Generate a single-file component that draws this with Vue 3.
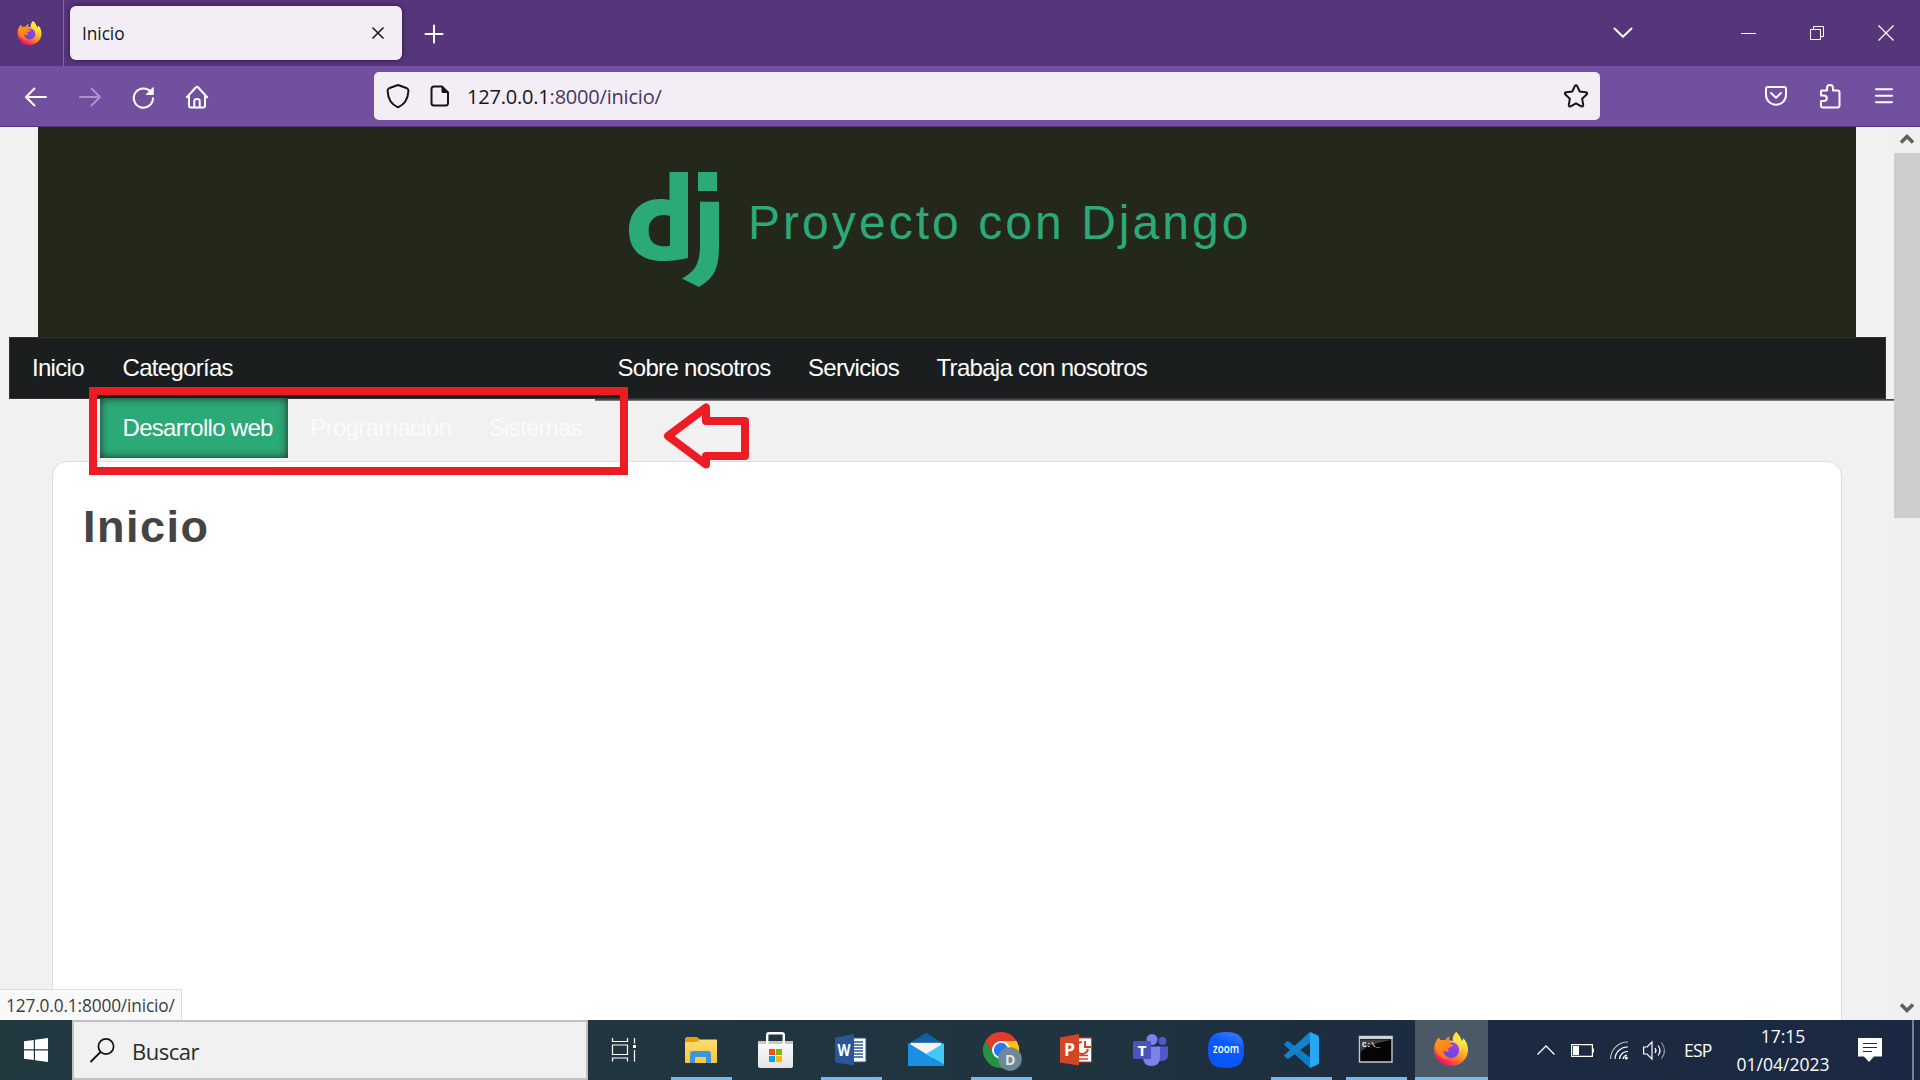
<script setup>
const mainLinks = ['Sobre nosotros', 'Servicios', 'Trabaja con nosotros']
const categories = ['Desarrollo web', 'Programación', 'Sistemas']
const apps = [
  { name: 'explorer', open: true },
  { name: 'store' },
  { name: 'word', open: true },
  { name: 'mail' },
  { name: 'chrome', open: true },
  { name: 'powerpoint' },
  { name: 'teams' },
  { name: 'zoom' },
  { name: 'code', open: true },
  { name: 'cmd', open: true },
  { name: 'firefox', open: true, active: true },
]
</script>

<template>
  <div class="screen">
    <svg class="defs" width="0" height="0">
      <defs>
        <linearGradient id="fxBody" x1="0.8" y1="0.1" x2="0.25" y2="1">
          <stop offset="0.1" stop-color="#fff04a" />
          <stop offset="0.4" stop-color="#ffb02a" />
          <stop offset="0.68" stop-color="#ff6a2c" />
          <stop offset="0.9" stop-color="#f5156c" />
        </linearGradient>
        <linearGradient id="fxGlobe" x1="0.7" y1="0" x2="0.3" y2="1">
          <stop offset="0" stop-color="#a63af5" />
          <stop offset="1" stop-color="#5a4be0" />
        </linearGradient>
        <linearGradient id="fxHead" x1="0" y1="0" x2="0.6" y2="1">
          <stop offset="0" stop-color="#ff9a1c" />
          <stop offset="1" stop-color="#ff7a1c" />
        </linearGradient>
        <linearGradient id="folder" x1="0" y1="0" x2="0" y2="1">
          <stop offset="0" stop-color="#ffdc77" />
          <stop offset="1" stop-color="#fdc637" />
        </linearGradient>
        <linearGradient id="bag" x1="0" y1="0" x2="0" y2="1">
          <stop offset="0" stop-color="#fdfdfd" />
          <stop offset="1" stop-color="#e4e4e4" />
        </linearGradient>
        <linearGradient id="zoomBg" x1="0.8" y1="0" x2="0.4" y2="1">
          <stop offset="0" stop-color="#3c7dff" />
          <stop offset="0.35" stop-color="#0b5cff" />
          <stop offset="1" stop-color="#0a54f5" />
        </linearGradient>
      </defs>
      <symbol id="fx" viewBox="0 0 34 34">
        <path d="M22.2 0C25 3 27 6 27.7 9C28.8 8.6 29 7.4 29.3 6.2C32.6 9.5 34 13.5 34 17.8C34 27.2 26.4 34 17 34C7.6 34 0 27 0 17.6C0 13 1.4 9 5 5.4C5.2 7 5.8 8 7 8.6C8.5 8 10 8 11.3 8.4C12.3 6.8 13.6 5.6 15.6 4.6C14.9 6 14.9 7.3 15.3 8.6L18.7 9C18.4 5.5 19.6 2.4 22.2 0Z" fill="url(#fxBody)" />
        <circle cx="17.3" cy="18.2" r="7.9" fill="url(#fxGlobe)" />
        <path d="M1.4 12C2.6 9.6 3.7 7 5 5.4C5.2 7 5.8 8 7 8.6C8.5 8 10 8 11.3 8.4C12.3 6.8 13.6 5.6 15.6 4.6C14.7 6.6 15 9.2 16.4 11.6L19.3 13.2C18.5 15 15.6 14.8 14.2 16.4C13.2 17.4 14 18.6 16 18.7C13 20.6 10.2 19.8 8.7 17.6C8.2 22.4 11.4 26 16.4 26.2C10 28 4.2 24.4 2.6 18.4C2.1 16.2 1.5 14 1.4 12Z" fill="url(#fxHead)" />
        <path d="M19.3 9.2C24.5 10.3 27 15 25.3 20C28.6 17.4 29 12 27.7 9C27 6 25 3 22.2 0C19.4 2.6 18.4 5.6 19.3 9.2Z" fill="#ffe23f" opacity=".75" />
      </symbol>
    </svg>

    <!-- Browser tab strip -->
    <div class="tabstrip">
      <div class="pinned"><svg width="25" height="24" preserveAspectRatio="none"><use href="#fx" width="25" height="24" /></svg></div>
      <div class="tab">
        <span>Inicio</span>
        <svg width="14" height="14" viewBox="0 0 14 14"><path d="M1.500 1.500L12.500 12.500M12.500 1.500L1.500 12.500" stroke="#15141a" stroke-width="1.500" /></svg>
      </div>
      <svg class="plus" width="18" height="18" viewBox="0 0 18 18"><path d="M9 .5V17.500M.5 9H17.500" stroke="#fff" stroke-width="2" stroke-linecap="round" /></svg>
      <div class="window-controls">
        <svg width="20" height="12" viewBox="0 0 20 12"><path d="M1.500 1.500L10 9.700L18.500 1.500" fill="none" stroke="#fff" stroke-width="2" stroke-linecap="round" stroke-linejoin="round" /></svg>
        <svg width="15" height="3" viewBox="0 0 15 3"><path d="M0 1.500H15" stroke="#fff" /></svg>
        <svg width="14" height="14" viewBox="0 0 14 14"><path d="M.5 3.500H10.500V13.500H.5ZM3.500 3.500V.5H13.500V10.500H10.500" fill="none" stroke="#fff" /></svg>
        <svg width="16" height="16" viewBox="0 0 16 16"><path d="M.5 .5L15.500 15.500M15.500 .5L.5 15.500" stroke="#fff" stroke-width="1.300" /></svg>
      </div>
    </div>

    <!-- Browser toolbar -->
    <div class="toolbar">
      <div class="nav-icons">
        <svg width="24" height="24" viewBox="0 0 24 24"><path d="M22 12H2.500M10.500 3.500L2 12L10.500 20.500" class="ln" /></svg>
        <svg width="24" height="24" viewBox="0 0 24 24" opacity=".4"><path d="M2 12H21.500M13.500 3.500L22 12L13.500 20.500" class="ln" /></svg>
        <svg width="24" height="24" viewBox="0 0 24 24"><path d="M20 7.200A9.600 9.600 0 1 0 22 13.300" class="ln" /><path d="M22.200 2.500V9.500H15.200Z" fill="#fff" stroke="#fff" stroke-linejoin="round" /></svg>
        <svg width="24" height="24" viewBox="0 0 24 24"><path d="M1.800 12.200L11 2.300Q12 1.300 13 2.300L22.200 12.200M4 10.500V20.600Q4 22.500 6 22.500H18Q20 22.500 20 20.600V10.500M9.300 22V16Q9.300 14 12 14T14.700 16V22" class="ln" /></svg>
      </div>
      <div class="urlbar">
        <svg class="shield" width="24" height="26" viewBox="0 0 24 26"><path d="M12 2L21 5.300Q22.600 6 22.400 8C22 16.500 18.500 21.500 12 24.300C5.500 21.500 2 16.500 1.600 8Q1.400 6 3 5.300Z" fill="none" stroke="#15141a" stroke-width="2" stroke-linejoin="round" /></svg>
        <svg class="doc" width="20" height="22" viewBox="0 0 20 22"><path d="M4 1.500H12L18 7.500V18Q18 20.500 15.500 20.500H4Q1.500 20.500 1.500 18V4Q1.500 1.500 4 1.500Z" fill="none" stroke="#15141a" stroke-width="2" /><path d="M11.500 1L18.500 8H13Q11.500 8 11.500 6.500Z" fill="#15141a" /></svg>
        <span class="url"><b>127.0.0.1</b>:8000/inicio/</span>
        <svg class="star" width="26" height="24" viewBox="0 0 26 24"><path d="M11.700 2.300Q13 .3 14.300 2.300L16.700 7.500L22.800 8.300Q25 8.800 23.600 10.500L19.200 14.800L20.200 20.800Q20.300 23 18.300 22.300L13 19.300L7.700 22.300Q5.700 23 5.800 20.800L6.800 14.800L2.400 10.500Q1 8.800 3.200 8.300L9.300 7.500Z" fill="none" stroke="#15141a" stroke-width="2" stroke-linejoin="round" /></svg>
      </div>
      <div class="tools">
        <svg width="22" height="20" viewBox="0 0 22 20"><path d="M3 1H19Q21 1 21 3V9A10 9.700 0 0 1 1 9V3Q1 1 3 1ZM6 7L11 11.700L16 7" class="ln" /></svg>
        <svg class="puzzle" width="22" height="26" viewBox="0 0 22 26"><path d="M3 7.500H8V5Q8 2 11 2T14 5V7.500H18.500Q20.500 7.500 20.500 9.500V22.500Q20.500 24.500 18.500 24.500H4Q2 24.500 2 22.500V18H5Q7.800 18 7.800 15.300T5 12.600H2V8.500Q2 7.500 3 7.500Z" class="ln" /></svg>
        <svg width="18" height="18" viewBox="0 0 18 18"><path d="M1 2.200H17M1 8.700H17M1 15.200H17" class="ln" /></svg>
      </div>
    </div>

    <!-- Web page -->
    <div class="viewport">
      <div class="page">
        <header class="site-header">
          <svg width="90" height="116" viewBox="0 0 90 116" fill="#2ba977">
            <path fill-rule="evenodd" d="M40.500 0H59V86C50 88 44 89 34 89C12 89 0 78 0 58.500C0 39 13 27 31 27C34.500 27 37.500 27.300 40.500 28ZM41 44C39 43.200 37 43 35 43C25 43 19.600 49 19.600 58.500C19.600 68.500 25 74.300 35 74.300C37.500 74.300 39 74.200 41 73.800Z" />
            <path d="M69 0H88V19H69ZM71 29.800H90V73C90 97 85 106 70 115L53 106.500C67 99 71 91 71 72Z" />
          </svg>
          <h1>Proyecto con Django</h1>
        </header>
        <nav class="site-nav">
          <a class="link">Inicio</a>
          <div class="dropdown">
            <a class="link">Categorías</a>
            <div class="submenu">
              <a v-for="(c, i) in categories" :key="c" class="link" :class="{ hover: i === 0 }">{{ c }}</a>
            </div>
          </div>
          <a v-for="l in mainLinks" :key="l" class="link">{{ l }}</a>
        </nav>
        <div class="rule"></div>
        <main class="card"><h2>Inicio</h2></main>
        <div class="status">127.0.0.1:8000/inicio/</div>
        <!-- Hand-drawn annotations -->
        <div class="mark-box"></div>
        <svg class="mark-arrow" width="86" height="70" viewBox="0 0 86 70"><path d="M42 5.500V19H81V54H42V62.500L4 34Z" fill="none" stroke="#ed1c24" stroke-width="8" stroke-linejoin="round" /></svg>
      </div>
      <div class="scrollbar">
        <svg width="14" height="12" viewBox="0 0 14 12"><path d="M1 9.500L7 3.500L13 9.500" fill="none" stroke="#606060" stroke-width="3.600" /></svg>
        <div class="thumb"></div>
        <svg class="down" width="14" height="12" viewBox="0 0 14 12"><path d="M1 2.500L7 8.500L13 2.500" fill="none" stroke="#606060" stroke-width="3.600" /></svg>
      </div>
    </div>

    <!-- Windows taskbar -->
    <div class="taskbar">
      <div class="start"><svg width="24" height="24" viewBox="0 0 24 24" fill="#fff"><path d="M0 3.300L9.800 2V11.300H0ZM11 1.800L24 0V11.300H11ZM0 12.500H9.800V22L0 20.700ZM11 12.500H24V24L11 22.200Z" /></svg></div>
      <div class="search">
        <svg width="26" height="26" viewBox="0 0 26 26"><circle cx="16" cy="8.500" r="7.600" fill="none" stroke="#111" stroke-width="1.700" /><path d="M10.500 14L.5 24" stroke="#111" stroke-width="1.800" /></svg>
        <span>Buscar</span>
      </div>
      <div class="taskview"><svg width="25" height="24" viewBox="0 0 25 24"><path d="M.5 0V3.500H15.500V0M.5 7H15.500V16.500H.5ZM.5 23.500V20H15.500V23.500M22.500 0V5.500M22.500 12V23.500" fill="none" stroke="#fff" stroke-width="1.200" /><path d="M21 7H24V10H21Z" fill="#fff" /></svg></div>
      <div v-for="a in apps" :key="a.name" class="app" :class="{ open: a.open, active: a.active }">
        <svg width="38" height="38" viewBox="0 0 38 38">
          <g v-if="a.name === 'explorer'">
            <path d="M2 7Q2 5 4 5H14L17 7.500V11H2Z" fill="#e2a100" />
            <path d="M2 10H14L17 7.500H33Q34 7.500 34 8.500V30Q34 31 33 31H3Q2 31 2 30Z" fill="url(#folder)" />
            <path d="M7 31V22Q7 19 10 19H25Q28 19 28 22V31H23V25H12V31Z" fill="#3a96dd" />
          </g>
          <g v-else-if="a.name === 'store'">
            <path d="M0 9H35V34Q35 36 33 36H2Q0 36 0 34Z" fill="url(#bag)" /><path d="M0 9H35V12H0Z" fill="#c9c9c9" />
            <path d="M9.200 12V3Q9.200 1.200 11 1.200H24Q25.800 1.200 25.800 3V12" fill="none" stroke="#fff" stroke-width="2.400" />
            <path d="M11 17H17V23H11Z" fill="#f25022" /><path d="M18 17H24V23H18Z" fill="#7fba00" /><path d="M11 24H17V30H11Z" fill="#00a4ef" /><path d="M18 24H24V30H18Z" fill="#ffb900" />
          </g>
          <g v-else-if="a.name === 'word'">
            <path d="M19 6H33V30H19Z" fill="#fff" stroke="#2b5797" /><path d="M20 10H30M20 13H30M20 16H30M20 19H30M20 22H30M20 25H30" stroke="#2b5797" stroke-width="1.400" />
            <path d="M2 5.500L21 2V33.500L2 30.500Z" fill="#2a5699" /><text x="4.500" y="23.500" textLength="13" lengthAdjust="spacingAndGlyphs" class="glyph">W</text>
          </g>
          <g v-else-if="a.name === 'mail'">
            <path d="M0 12L18 .8L36 12V17H0Z" fill="#0f5fa8" /><path d="M2.500 10.800H33.500V26H2.500Z" fill="#f4f4f4" />
            <path d="M0 11L18 22L0 33Z" fill="#1e9be9" /><path d="M36 11V33L18 22Z" fill="#41caf5" /><path d="M0 11L36 33V34H1Q0 34 0 33Z" fill="#1a90e2" />
          </g>
          <g v-else-if="a.name === 'chrome'">
            <path d="M18 0A18 18 0 0 1 33.600 9H18L10.200 22.500L2.400 9A18 18 0 0 1 18 0Z" fill="#e33b2e" />
            <path d="M33.600 9A18 18 0 0 1 18 36L25.800 22.500L18 9Z" fill="#fbc116" /><path d="M2.400 9L10.200 22.500H25.800L18 36A18 18 0 0 1 2.400 9Z" fill="#229342" />
            <circle cx="18" cy="18" r="9" fill="#fff" /><circle cx="18" cy="18" r="7.200" fill="#2b79e8" />
            <circle cx="27" cy="27" r="11.800" fill="#708894" /><text x="22" y="32.500" textLength="10.500" lengthAdjust="spacingAndGlyphs" class="glyph badge">D</text>
          </g>
          <g v-else-if="a.name === 'powerpoint'">
            <path d="M19 6H33.500V30H19Z" fill="#fff" stroke="#d04423" /><path d="M27 9V15H33M24 10A6 6 0 1 0 30 17" fill="none" stroke="#d04423" stroke-width="2" /><path d="M20 23.500H30M20 27H30" stroke="#d04423" stroke-width="1.500" />
            <path d="M2 5.500L21 2V33.500L2 30.500Z" fill="#d24625" /><text x="6" y="24" textLength="11" lengthAdjust="spacingAndGlyphs" class="glyph p">P</text>
          </g>
          <g v-else-if="a.name === 'teams'">
            <circle cx="29.500" cy="9" r="4" fill="#5059c9" /><path d="M25 14.500H35V23Q35 29 28 29H25Z" fill="#5059c9" />
            <circle cx="19" cy="7.500" r="5.500" fill="#7b83eb" /><path d="M10 14.500H27V25Q27 34 18.500 34T10 25Z" fill="#7b83eb" />
            <rect y="9" width="18" height="18" rx="1.500" fill="#4b53bc" /><text x="4.500" y="23.500" textLength="9" lengthAdjust="spacingAndGlyphs" class="glyph t">T</text>
          </g>
          <g v-else-if="a.name === 'zoom'">
            <path d="M18 0C31 0 36 5 36 18S31 36 18 36S0 31 0 18S5 0 18 0Z" fill="url(#zoomBg)" /><text x="5" y="21" textLength="26" lengthAdjust="spacingAndGlyphs" class="glyph z">zoom</text>
          </g>
          <g v-else-if="a.name === 'code'">
            <path d="M.8 12.500L4 9.300Q5 8.700 6 9.500L30 27.500V34L27 36Z" fill="#0e7dc4" /><path d="M.8 23.500L4 26.700Q5 27.300 6 26.500L30 8.500V2L27 0Z" fill="#1583cc" /><path d="M27 0L34.500 3.300Q36 4 36 5.500V30.500Q36 32 34.500 32.700L27 36Z" fill="#27a9f1" />
          </g>
          <g v-else-if="a.name === 'cmd'">
            <path d="M1.500 4.500H34V30H1.500Z" fill="#050505" stroke="#c8c8c8" stroke-width="1.400" /><path d="M1 4H34.500V7H1Z" fill="#ccd3d8" /><path d="M2.500 7.500H33C23 11 12 11 2.500 20Z" fill="#555" opacity=".75" /><text x="4" y="14.500" textLength="18" lengthAdjust="spacingAndGlyphs" class="glyph c">C:\_</text>
          </g>
          <use v-else href="#fx" x="1" y="0" width="34" height="34" />
        </svg>
      </div>
      <div class="tray">
        <svg class="up" width="18" height="10" viewBox="0 0 18 10"><path d="M.5 9.500L9 1L17.500 9.500" fill="none" stroke="#fff" stroke-width="1.300" /></svg>
        <svg class="bat" width="23" height="13" viewBox="0 0 23 13"><path d="M.6 .6H21.400V12.400H.6Z" fill="none" stroke="#fff" stroke-width="1.200" /><path d="M2 2H8V11H2ZM21 4.500H23V8.500H21Z" fill="#fff" /></svg>
        <svg class="wifi" width="18" height="19" viewBox="0 0 18 19"><g fill="none" stroke="#fff" stroke-width="1.200"><path d="M.6 18A17 17 0 0 1 18 1" opacity=".7" /><path d="M5 18A12.500 12.500 0 0 1 18 6" /><path d="M9.500 18A8 8 0 0 1 18 10.500" /></g><path d="M13 18A5 5 0 0 1 17 14" stroke="#fff" fill="none" stroke-width="1.200" /><circle cx="16.300" cy="17" r="1.600" fill="#fff" /></svg>
        <svg class="vol" width="23" height="19" viewBox="0 0 23 19"><g fill="none" stroke="#fff" stroke-width="1.200"><path d="M.6 6H4L9 1V18L4 13H.6Z" /><path d="M12 7Q14 9.500 12 12M15 4.500Q19 9.500 15 14.500" /><path d="M18.500 1.500Q24.500 9.500 18.500 17.500" opacity=".5" /></g></svg>
        <span class="lang">ESP</span>
        <div class="clock"><span>17:15</span><span class="date">01/04/2023</span></div>
        <svg class="note" width="24" height="24" viewBox="0 0 24 24"><path d="M0 0H24V18.500H16L11 24L6 18.500H0Z" fill="#fff" /><path d="M5 5.500H19M5 9.500H19M5 13.500H14" stroke="#1c2b42" stroke-width="1.200" /></svg>
        <div class="desk"></div>
      </div>
    </div>
  </div>
</template>

<style>
body { margin: 0; overflow: hidden; }
</style>

<style scoped>
.screen { width: 1920px; height: 1080px; display: flex; flex-direction: column; overflow: hidden; font-family: "Open Sans", sans-serif; position: relative; }
.defs { position: absolute; }
svg { display: block; flex: none; overflow: visible; }
.ln { fill: none; stroke: #fff; stroke-width: 2; stroke-linecap: round; stroke-linejoin: round; }

.tabstrip { height: 66px; background: #55367a; display: flex; align-items: center; flex: none; }
.pinned { width: 64px; height: 66px; border-right: 1px solid #85699f; display: flex; align-items: center; padding-left: 17px; box-sizing: border-box; }
.tab { width: 332px; height: 54px; margin-left: 6px; box-sizing: border-box; padding: 0 17px 0 12px; border-radius: 6px; background: #f3eef5; box-shadow: 0 0 5px #2b1546; display: flex; align-items: center; justify-content: space-between; font-size: 17.300px; color: #15141a; }
.tab span { letter-spacing: -.05px; }
.plus { margin-left: 23px; margin-top: 2px; }
.window-controls { display: flex; align-items: center; margin-left: auto; padding-right: 26px; }
.window-controls svg:nth-child(2) { margin-left: 108px; }
.window-controls svg:nth-child(3) { margin-left: 54px; }
.window-controls svg:nth-child(4) { margin-left: 54px; }

.toolbar { height: 61px; box-sizing: border-box; border-bottom: 1px solid #55367a; background: #7250a0; display: flex; align-items: center; flex: none; }
.nav-icons { display: flex; gap: 29.700px; width: 350px; padding-left: 24px; padding-top: 1px; }
.urlbar { width: 1226px; height: 48px; border-radius: 5px; background: #f3eef5; display: flex; align-items: center; box-sizing: border-box; padding: 0 11px 0 12px; }
.doc { margin-left: 20px; }
.url { margin-left: 17px; font-size: 20px; letter-spacing: -.2px; color: #4a3560; line-height: 28px; padding-top: 2px; }
.url b { color: #15141a; font-weight: 400; }
.star { margin-left: auto; }
.tools { display: flex; align-items: center; margin-left: 165px; }
.tools svg:nth-child(2) { margin-left: 32px; }
.tools svg:nth-child(3) { margin-left: 34px; }

.viewport { height: 893px; flex: none; display: flex; background: #f1f1f1; overflow: hidden; font-family: "Liberation Sans", Arial, sans-serif; }
.page { width: 1894px; position: relative; display: flex; flex-direction: column; }
.site-header { height: 210px; margin: 0 38px; flex: none; background: #24281a; display: flex; padding: 45px 0 0 591px; box-sizing: border-box; }
.site-header h1 { margin: 23px 0 0 29px; font-size: 48px; line-height: 56px; font-weight: 400; letter-spacing: 3.050px; color: #2ba977; white-space: nowrap; }
.site-nav { height: 62px; width: 1877px; margin-left: 9px; flex: none; box-sizing: border-box; border: 1px solid #333; background: #1b1e1f; display: flex; }
.link { height: 60px; line-height: 60px; font-size: 24px; letter-spacing: -.7px; color: #fff; padding: 0 15px 0 22.500px; white-space: nowrap; display: block; flex: none; }
.site-nav > .link:first-child { width: 68px; padding-left: 22px; padding-right: 0; }
.dropdown { width: 495px; position: relative; flex: none; }
.submenu { position: absolute; top: 60px; left: 0; width: 495px; height: 60px; display: flex; z-index: 2; }
.submenu .link { color: #fbfbfb; }
.submenu .hover { color: #fff; background: #2ba977; box-shadow: inset 0 0 8px #222; }
.rule { height: 2px; margin-left: 595px; flex: none; background: linear-gradient(#4b4849 50%, #7b7778 50%); }
.card { width: 1790px; height: 700px; margin: 60px 0 0 52px; box-sizing: border-box; border: 1px solid #ddd; border-radius: 15px; background: #fff; padding: 40px 0 0 30px; flex: none; }
.card h2 { margin: 0; font-size: 45px; line-height: 50px; letter-spacing: 1.500px; color: #444; }
.status { position: absolute; left: 0; bottom: 0; width: 182px; height: 31px; box-sizing: border-box; border: 1px solid #ddd; border-width: 1px 1px 0 0; background: #f9f9fa; padding-left: 6px; font: 17.300px/31px "Open Sans", sans-serif; letter-spacing: -.15px; color: #3c3c40; white-space: nowrap; }
.mark-box { position: absolute; z-index: 3; left: 89px; top: 260px; width: 539px; height: 88px; box-sizing: border-box; border: 8px solid #ed1c24; }
.mark-arrow { position: absolute; z-index: 3; left: 664px; top: 275px; }
.scrollbar { width: 26px; background: #f0f0f0; display: flex; flex-direction: column; align-items: center; padding-top: 6px; box-sizing: border-box; }
.thumb { width: 26px; height: 365px; background: #cdcdcd; margin-top: 8px; }
.down { margin-top: auto; margin-bottom: 6px; }

.taskbar { height: 60px; flex: none; display: flex; background: linear-gradient(90deg, #21383f, #20343f 55%, #1c2b40 75%, #1a2843); }
.start { width: 72px; display: flex; align-items: center; padding-left: 24px; box-sizing: border-box; }
.search { width: 516px; box-sizing: border-box; border: 2px solid #c0c0c0; background: #f1f1f1; display: flex; padding: 16px 0 0 16px; }
.search span { margin-left: 16px; font-size: 22px; line-height: 26px; color: #2b2b2b; letter-spacing: -.5px; }
.taskview { width: 76px; display: flex; padding: 18px 0 0 24px; box-sizing: border-box; }
.app { width: 75px; height: 60px; box-sizing: border-box; padding: 12px 0 0 19px; position: relative; flex: none; }
.app.open::after { content: ""; position: absolute; left: 7px; right: 7px; bottom: 0; height: 3px; background: #76b9ed; }
.app.active { background: linear-gradient(#4a5965, #4a5965) 1px 0 / 73px 60px no-repeat; }
.app.active::after { left: 1px; right: 1px; }
.glyph { fill: #fff; font: 700 15.500px "Open Sans", sans-serif; }
.badge { font-size: 15px; fill: #dfe6ea; }
.p { font-size: 17px; }
.t { font-size: 15px; }
.z { font: 600 12px "Open Sans", sans-serif; }
.c { font: 700 7px "Liberation Mono", monospace; }
.tray { display: flex; align-items: center; flex: 1; color: #fff; font-size: 17.500px; }
.up { margin-left: 48px; }
.bat { margin-left: 16px; }
.wifi { margin-left: 16px; }
.vol { margin-left: 15px; }
.lang { margin-left: 18px; width: 50px; letter-spacing: -.8px; }
.clock { display: flex; flex-direction: column; align-items: center; line-height: 28px; width: 98px; letter-spacing: 0; flex: none; }
.note { margin-left: 26px; }
.desk { width: 2px; height: 60px; margin-left: auto; margin-right: 6px; background: #77808f; }
</style>
